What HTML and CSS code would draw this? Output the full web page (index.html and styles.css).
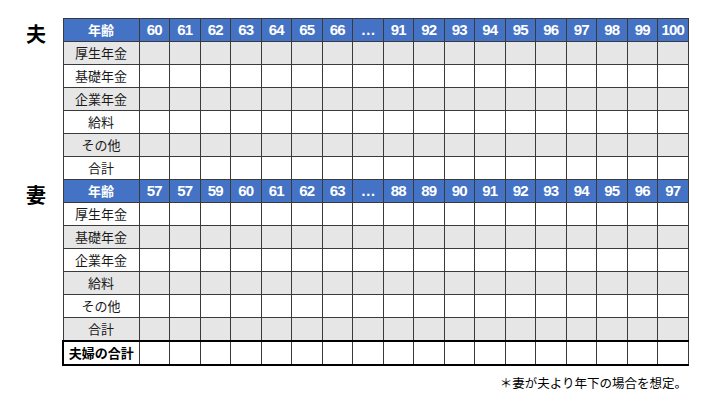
FILE: index.html
```html
<!DOCTYPE html>
<html lang="ja">
<head>
<meta charset="utf-8">
<link rel="stylesheet" href="styles.css">
</head>
<body>
<div class="page">
  <div class="layout">
    <div class="side">
      <div class="who">夫</div>
      <div class="who">妻</div>
    </div>
    <table class="grid">
      <colgroup>
        <col class="c-label">
        <col span="18" class="c-num">
      </colgroup>
      <tbody>
        <tr class="head">
          <td>年齢</td><td>60</td><td>61</td><td>62</td><td>63</td><td>64</td><td>65</td><td>66</td><td>…</td><td>91</td><td>92</td><td>93</td><td>94</td><td>95</td><td>96</td><td>97</td><td>98</td><td>99</td><td>100</td>
        </tr>
        <tr class="gray"><td>厚生年金</td><td></td><td></td><td></td><td></td><td></td><td></td><td></td><td></td><td></td><td></td><td></td><td></td><td></td><td></td><td></td><td></td><td></td><td></td></tr>
        <tr><td>基礎年金</td><td></td><td></td><td></td><td></td><td></td><td></td><td></td><td></td><td></td><td></td><td></td><td></td><td></td><td></td><td></td><td></td><td></td><td></td></tr>
        <tr class="gray"><td>企業年金</td><td></td><td></td><td></td><td></td><td></td><td></td><td></td><td></td><td></td><td></td><td></td><td></td><td></td><td></td><td></td><td></td><td></td><td></td></tr>
        <tr><td>給料</td><td></td><td></td><td></td><td></td><td></td><td></td><td></td><td></td><td></td><td></td><td></td><td></td><td></td><td></td><td></td><td></td><td></td><td></td></tr>
        <tr class="gray"><td>その他</td><td></td><td></td><td></td><td></td><td></td><td></td><td></td><td></td><td></td><td></td><td></td><td></td><td></td><td></td><td></td><td></td><td></td><td></td></tr>
        <tr><td>合計</td><td></td><td></td><td></td><td></td><td></td><td></td><td></td><td></td><td></td><td></td><td></td><td></td><td></td><td></td><td></td><td></td><td></td><td></td></tr>
        <tr class="head">
          <td>年齢</td><td>57</td><td>57</td><td>59</td><td>60</td><td>61</td><td>62</td><td>63</td><td>…</td><td>88</td><td>89</td><td>90</td><td>91</td><td>92</td><td>93</td><td>94</td><td>95</td><td>96</td><td>97</td>
        </tr>
        <tr><td>厚生年金</td><td></td><td></td><td></td><td></td><td></td><td></td><td></td><td></td><td></td><td></td><td></td><td></td><td></td><td></td><td></td><td></td><td></td><td></td></tr>
        <tr class="gray"><td>基礎年金</td><td></td><td></td><td></td><td></td><td></td><td></td><td></td><td></td><td></td><td></td><td></td><td></td><td></td><td></td><td></td><td></td><td></td><td></td></tr>
        <tr><td>企業年金</td><td></td><td></td><td></td><td></td><td></td><td></td><td></td><td></td><td></td><td></td><td></td><td></td><td></td><td></td><td></td><td></td><td></td><td></td></tr>
        <tr class="gray"><td>給料</td><td></td><td></td><td></td><td></td><td></td><td></td><td></td><td></td><td></td><td></td><td></td><td></td><td></td><td></td><td></td><td></td><td></td><td></td></tr>
        <tr><td>その他</td><td></td><td></td><td></td><td></td><td></td><td></td><td></td><td></td><td></td><td></td><td></td><td></td><td></td><td></td><td></td><td></td><td></td><td></td></tr>
        <tr class="gray"><td>合計</td><td></td><td></td><td></td><td></td><td></td><td></td><td></td><td></td><td></td><td></td><td></td><td></td><td></td><td></td><td></td><td></td><td></td><td></td></tr>
        <tr class="total"><td>夫婦の合計</td><td></td><td></td><td></td><td></td><td></td><td></td><td></td><td></td><td></td><td></td><td></td><td></td><td></td><td></td><td></td><td></td><td></td><td></td></tr>
      </tbody>
    </table>
  </div>
  <p class="note">＊妻が夫より年下の場合を想定。</p>
</div>
</body>
</html>
```

FILE: styles.css
```css
html, body {
  margin: 0;
  padding: 0;
  background: #ffffff;
}

body {
  font-family: "Noto Sans CJK JP", "Liberation Sans", sans-serif;
  color: #1a1a1a;
}

.page {
  width: 714px;
  height: 400px;
  padding-top: 18px;
  box-sizing: border-box;
}

.layout {
  display: flex;
  align-items: flex-start;
}

.side {
  width: 62px;
  flex: none;
  display: flex;
  flex-direction: column;
}

.who {
  height: 161px;
  box-sizing: border-box;
  padding-top: 4px;
  padding-left: 26px;
  font-size: 20px;
  line-height: 24px;
  font-weight: 700;
  color: #000;
}

.grid {
  width: 625px;
  table-layout: fixed;
  border-collapse: collapse;
  border: 1px solid #333;
}

.c-label { width: 76px; }
.c-num { width: 30.5px; }

.grid td {
  height: 22px;
  padding: 0;
  border: 1px solid #3a3a3a;
  text-align: center;
  vertical-align: middle;
  font-size: 13px;
  line-height: 16px;
  white-space: nowrap;
  overflow: hidden;
}

.grid tr.gray td {
  background: #e7e6e6;
}

.grid tr.head td {
  background: #4472c4;
  color: #ffffff;
  font-weight: 700;
  font-family: "Liberation Sans", "Noto Sans CJK JP", sans-serif;
  font-size: 15px;
  letter-spacing: -0.8px;
}

.grid tr.head td:first-child {
  font-family: "Noto Sans CJK JP", sans-serif;
  font-size: 13px;
  letter-spacing: 0;
}

.grid tr.total td {
  border-top: 2px solid #000;
  border-bottom: 2px solid #000;
  background: #ffffff;
}

.grid tr.total td:first-child {
  border-left: 2px solid #000;
  font-weight: 700;
  color: #000;
}

.note {
  margin: 8px 0 0 0;
  width: 687px;
  text-align: right;
  font-size: 12.5px;
  line-height: 18px;
  color: #000;
}
```
